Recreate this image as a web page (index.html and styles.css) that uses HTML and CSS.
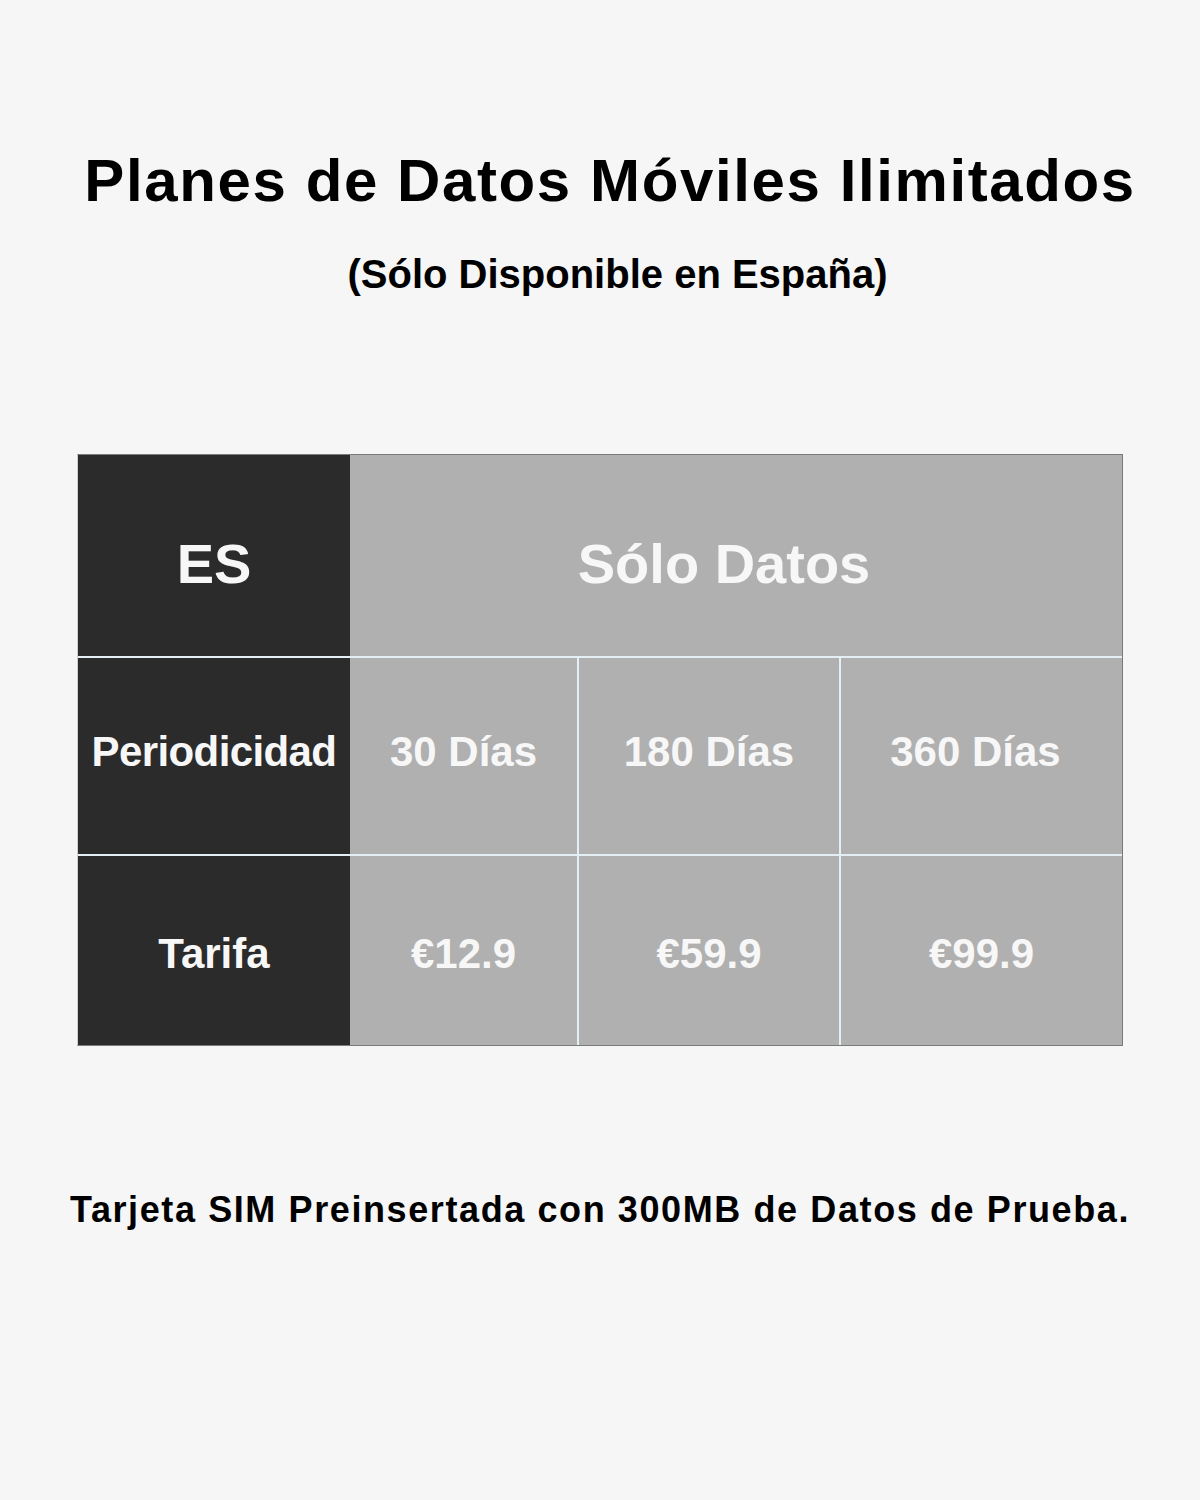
FILE: index.html
```html
<!DOCTYPE html>
<html lang="es">
<head>
<meta charset="utf-8">
<title>Planes de Datos</title>
<link rel="stylesheet" href="styles.css">
</head>
<body>
<main class="page">
  <h1 class="title">Planes de Datos Móviles Ilimitados</h1>
  <p class="subtitle">(Sólo Disponible en España)</p>
  <div class="table">
    <div class="cell dark head">ES</div>
    <div class="cell gray head span3 shift">Sólo Datos</div>
    <div class="cell dark row topline tight">Periodicidad</div>
    <div class="cell gray row topline">30 Días</div>
    <div class="cell gray row topline leftline">180 Días</div>
    <div class="cell gray row topline leftline nudge">360 Días</div>
    <div class="cell dark row topline low">Tarifa</div>
    <div class="cell gray row topline low">€12.9</div>
    <div class="cell gray row topline leftline low">€59.9</div>
    <div class="cell gray row topline leftline low">€99.9</div>
  </div>
  <p class="footer">Tarjeta SIM Preinsertada con 300MB de Datos de Prueba.</p>
</main>
</body>
</html>
```
FILE: styles.css
```css
html, body {
  margin: 0;
  padding: 0;
  background: #f6f6f6;
}
.page {
  width: 1200px;
  height: 1500px;
  display: flex;
  flex-direction: column;
  align-items: center;
  font-family: "Liberation Sans", Arial, sans-serif;
  color: #000;
}
.title {
  margin: 146px 0 0 0;
  padding-left: 20px;
  font-size: 60px;
  line-height: 70px;
  font-weight: 700;
  letter-spacing: 1.6px;
}
.subtitle {
  margin: 34px 0 0 0;
  padding-left: 35px;
  font-size: 40px;
  line-height: 48px;
  font-weight: 700;
}
.table {
  margin-top: 156px;
  display: grid;
  grid-template-columns: 272px 227px 262px 283px;
  grid-template-rows: 201px 198px 191px;
  border: 1px solid #7a7a7a;
  border-left-color: #cfcfcf;
}
.cell {
  display: flex;
  align-items: center;
  justify-content: center;
  color: #f7f7f7;
  font-weight: 700;
  box-sizing: border-box;
}
.dark { background: #2b2b2b; }
.gray { background: #b0b0b0; }
.span3 { grid-column: span 3; }
.head { font-size: 56px; padding-top: 16px; }
.shift { padding-right: 24px; }
.row { font-size: 42px; padding-bottom: 8px; }
.tight { letter-spacing: -0.6px; }
.low { padding-bottom: 0; padding-top: 6px; }
.nudge { padding-right: 12px; }
.topline { border-top: 2px solid #e4eef5; }
.leftline { border-left: 2px solid #e4eef5; }
.footer {
  margin: 142px 0 0 0;
  font-size: 36px;
  line-height: 44px;
  font-weight: 700;
  letter-spacing: 1.6px;
}
```
